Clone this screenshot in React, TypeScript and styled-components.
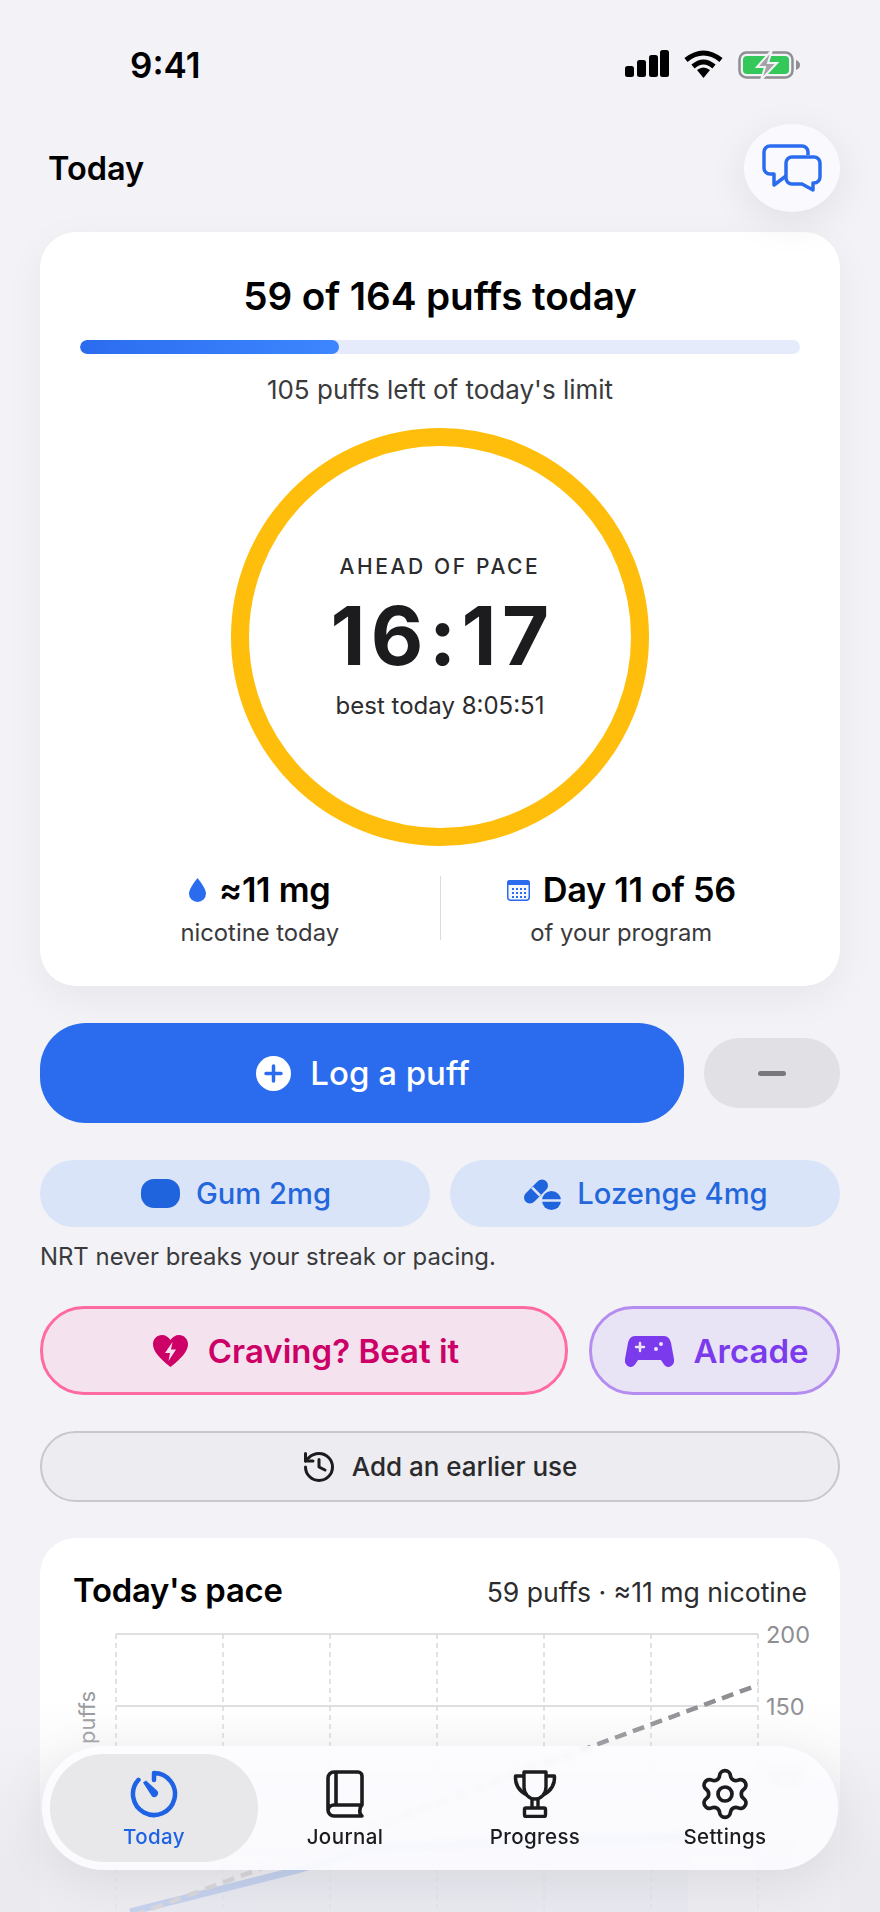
import React from 'react'
import styled, { createGlobalStyle } from 'styled-components'
import { History, Settings } from 'lucide-react'

const BLUE = '#2b6cee'
const INK = '#1c1c1e'

const GlobalStyle = createGlobalStyle`
  html, body {
    margin: 0;
    padding: 0;
    background: #f2f2f7;
  }
  * {
    box-sizing: border-box;
  }
`

const CHART_X = [76, 183, 290, 397, 504, 611, 718]
const CHART_Y = [
  { y: 14, label: '200' },
  { y: 86, label: '150' },
  { y: 158, label: '100' },
  { y: 230, label: '50' },
  { y: 302, label: '0' },
]

const App: React.FC = () => {
  return (
    <Screen>
      <GlobalStyle />
      <StatusBar>
        <Clock>9:41</Clock>
        <StatusIcons>
          <svg width="44" height="28" viewBox="0 0 44 28">
            <rect x="0" y="16" width="9" height="11" rx="2.5" fill="#000" />
            <rect x="12" y="10" width="9" height="17" rx="2.5" fill="#000" />
            <rect x="24" y="5" width="9" height="22" rx="2.5" fill="#000" />
            <rect x="35" y="0" width="9" height="27" rx="2.5" fill="#000" />
          </svg>
          <svg width="39" height="28" viewBox="0 0 39 28">
            <path d="M2 10 Q19.5 -4 37 10" fill="none" stroke="#000" strokeWidth="5" />
            <path d="M9 16.5 Q19.5 7.5 30 16.5" fill="none" stroke="#000" strokeWidth="5" />
            <path d="M13 20 Q19.5 15 26 20 L19.5 28 Z" fill="#000" />
          </svg>
          <svg width="63" height="30" viewBox="0 0 63 30">
            <rect x="1.5" y="2.5" width="53" height="25" rx="7" fill="none" stroke="#8e8e93" strokeWidth="2.5" />
            <rect x="5" y="6" width="46" height="18" rx="4" fill="#34c759" />
            <path d="M58 10 c3 1 4 3 4 5 s-1 4 -4 5 Z" fill="#8e8e93" />
            <path d="M34 0 L19 17 H27 L23 30 L39 13 H30 Z" fill="#a3a3a8" stroke="#f2f2f7" strokeWidth="2" />
          </svg>
        </StatusIcons>
      </StatusBar>

      <Header>
        <PageTitle>Today</PageTitle>
        <ChatButton aria-label="Messages">
          <svg width="60" height="48" viewBox="0 0 60 48" fill="none" stroke={BLUE} strokeWidth="3.5" strokeLinejoin="round">
            <path d="M46 11 V8 a6 6 0 0 0 -6 -6 H8 a6 6 0 0 0 -6 6 V24 a6 6 0 0 0 6 6 H12 V41 L24 32" />
            <path d="M30 13 H52 a6 6 0 0 1 6 6 V33 a6 6 0 0 1 -6 6 H51 V46 L40 40 H30 a6 6 0 0 1 -6 -6 V19 a6 6 0 0 1 6 -6 Z" />
          </svg>
        </ChatButton>
      </Header>

      <Content>
        <TodayCard>
          <Headline>59 of 164 puffs today</Headline>
          <Track>
            <TrackFill style={{ width: `${(59 / 164) * 100}%` }} />
          </Track>
          <Remaining>105 puffs left of today's limit</Remaining>
          <Ring>
            <RingLabel>AHEAD OF PACE</RingLabel>
            <RingTime>16:17</RingTime>
            <RingBest>best today 8:05:51</RingBest>
          </Ring>
          <Stats>
            <Stat>
              <StatValue>
                <svg width="17" height="24" viewBox="0 0 17 24">
                  <path d="M8.5 0 C8.5 0 0 10 0 15.5 a8.5 8.5 0 0 0 17 0 C17 10 8.5 0 8.5 0 Z" fill={BLUE} />
                </svg>
                ≈11 mg
              </StatValue>
              <StatLabel>nicotine today</StatLabel>
            </Stat>
            <StatDivider />
            <Stat $shift={2}>
              <StatValue>
                <svg width="23" height="21" viewBox="0 0 23 21">
                  <rect x="0.75" y="0.75" width="21.5" height="19.5" rx="3" fill="#f4f7fe" stroke={BLUE} strokeWidth="1.5" />
                  <path d="M3 0 H20 a3 3 0 0 1 3 3 V5 H0 V3 a3 3 0 0 1 3 -3 Z" fill={BLUE} />
                  {[9, 13, 17].map((y) =>
                    [5, 9, 13, 17].map((x) => <rect key={`${x}-${y}`} x={x} y={y - 1} width="2" height="2" fill={BLUE} />),
                  )}
                </svg>
                Day 11 of 56
              </StatValue>
              <StatLabel>of your program</StatLabel>
            </Stat>
          </Stats>
        </TodayCard>

        <LogRow>
          <LogButton>
            <svg width="35" height="35" viewBox="0 0 35 35">
              <circle cx="17.5" cy="17.5" r="17.5" fill="#fff" />
              <path d="M17.5 10 V25 M10 17.5 H25" stroke={BLUE} strokeWidth="3.5" strokeLinecap="round" />
            </svg>
            Log a puff
          </LogButton>
          <MinusButton aria-label="Remove a puff">
            <MinusBar />
          </MinusButton>
        </LogRow>

        <NrtRow>
          <NrtButton>
            <GumShape />
            Gum 2mg
          </NrtButton>
          <NrtButton>
            <svg width="37" height="32" viewBox="0 0 37 32">
              <path d="M6 19.5 L18 7.5" stroke="#1f64dc" strokeWidth="12" strokeLinecap="round" />
              <path d="M8 9.5 L16 17.5" stroke="#d9e4f8" strokeWidth="2.5" />
              <circle cx="27.5" cy="22.5" r="9.5" fill="#1f64dc" />
              <path d="M17 22.5 H37" stroke="#d9e4f8" strokeWidth="2.5" />
            </svg>
            Lozenge 4mg
          </NrtButton>
        </NrtRow>
        <Note>NRT never breaks your streak or pacing.</Note>

        <HelpRow>
          <HelpButton $bg="#f4e3ee" $border="#ff6ba0" $color="#cc0066" $grow>
            <svg width="35" height="32" viewBox="0 0 35 32">
              <path
                d="M17.5 32 C6 23 0 16 0 9 C0 4 4 0 9 0 C12.5 0 15.5 2 17.5 5 C19.5 2 22.5 0 26 0 C31 0 35 4 35 9 C35 16 29 23 17.5 32 Z"
                fill="#cc0066"
              />
              <path d="M19.5 7 L12 18 H17 L15.5 26 L23 14.5 H18 Z" fill="#f4e3ee" />
            </svg>
            Craving? Beat it
          </HelpButton>
          <HelpButton $bg="#e8e3f5" $border="#b58cef" $color="#7c3aed" $width={251}>
            <svg width="49" height="32" viewBox="0 0 49 32">
              <path
                d="M10 1 H39 C43 1 45 4 46 8 L49 24 C50 29 46 32 43 32 C40 32 38 28 36 25 H13 C11 28 9 32 6 32 C3 32 -1 29 0 24 L3 8 C4 4 6 1 10 1 Z"
                fill="#7c3aed"
              />
              <path d="M15 8 V16 M11 12 H19" stroke="#e8e3f5" strokeWidth="2.5" strokeLinecap="round" />
              <circle cx="31" cy="14" r="2" fill="#e8e3f5" />
              <circle cx="36" cy="9" r="2" fill="#e8e3f5" />
            </svg>
            Arcade
          </HelpButton>
        </HelpRow>

        <EarlierButton>
          <History size={36} strokeWidth={2} color={INK} />
          Add an earlier use
        </EarlierButton>

        <PaceCard>
          <PaceHeader>
            <PaceTitle>Today's pace</PaceTitle>
            <PaceSummary>59 puffs · ≈11 mg nicotine</PaceSummary>
          </PaceHeader>
          <PaceChart width="800" height="320" viewBox="0 0 800 320">
            {CHART_X.map((x) => (
              <line key={x} x1={x} x2={x} y1="14" y2="320" stroke="#cfcfd4" strokeWidth="1.2" strokeDasharray="5 4" />
            ))}
            {CHART_Y.map(({ y, label }) => (
              <g key={label}>
                <line x1="76" x2="718" y1={y} y2={y} stroke="#d4d4d8" strokeWidth="1.5" />
                <AxisText x="726" y={y + 9}>
                  {label}
                </AxisText>
              </g>
            ))}
            <path d="M90 292 L257 250 L333 228 L648 217 V302 H90 Z" fill="#2b6cee" fillOpacity="0.1" />
            <path d="M90 292 L257 250 L333 228 L648 217" fill="none" stroke={BLUE} strokeWidth="7" />
            <line x1="76" y1="302" x2="718" y2="65" stroke="#8e8e93" strokeWidth="4.5" strokeDasharray="12 7" />
            <AxisName x="0" y="0" transform="translate(55 124) rotate(-90)">
              puffs
            </AxisName>
            <rect x="44" y="140" width="14" height="80" fill="#9a9a9e" />
          </PaceChart>
        </PaceCard>
      </Content>

      <BottomFade />

      <TabBar>
        <Tab $active>
          <svg width="48" height="48" viewBox="0 0 48 48" fill="none">
            <path
              d="M24 10 V3 A21 21 0 1 1 8.5 9.8"
              stroke="#1f63e4"
              strokeWidth="4.5"
              strokeLinecap="round"
              strokeLinejoin="round"
            />
            <path d="M13 12.5 L16 10.5 L27.5 21 A4 4 0 0 1 22 26.5 Z" fill="#1f63e4" />
          </svg>
          <TabLabel $active>Today</TabLabel>
        </Tab>
        <Tab>
          <svg width="48" height="48" viewBox="0 0 38 48" fill="none" stroke={INK} strokeWidth="3.6" strokeLinejoin="round">
            <path d="M36 35 V6 a4 4 0 0 0 -4 -4 H8 a6 6 0 0 0 -6 6 V40 a6 6 0 0 0 6 6 H36 c-3 -2 -3 -8 0 -11 H8 a6 6 0 0 0 -6 5" />
            <path d="M10 2 V35" />
          </svg>
          <TabLabel>Journal</TabLabel>
        </Tab>
        <Tab>
          <svg width="48" height="48" viewBox="0 0 44 48" fill="none" stroke={INK} strokeWidth="3.4" strokeLinejoin="round">
            <path d="M11 2 H33 V17 C33 24 28 29 22 29 C16 29 11 24 11 17 Z" />
            <path d="M11 6 H2.5 C2 14 6 21 14 25 M33 6 H41.5 C42 14 38 21 30 25" />
            <path d="M19 29 V38 M25 29 V38" />
            <rect x="11.5" y="38" width="21" height="8.5" rx="1.5" />
          </svg>
          <TabLabel>Progress</TabLabel>
        </Tab>
        <Tab>
          <GearSlot>
            <Settings size={56} strokeWidth={1.6} color={INK} />
          </GearSlot>
          <TabLabel>Settings</TabLabel>
        </Tab>
      </TabBar>
    </Screen>
  )
}

const Screen = styled.div`
  position: relative;
  width: 880px;
  height: 1912px;
  overflow: hidden;
  background: #f2f2f7;
  font-family: Inter, 'Noto Sans', sans-serif;
  color: ${INK};
`

const StatusBar = styled.div`
  display: flex;
  justify-content: space-between;
  height: 124px;
  padding: 48px 79px 0 130px;
`

const Clock = styled.div`
  font-size: 35px;
  line-height: 34px;
  font-weight: 600;
  color: #000;
`

const StatusIcons = styled.div`
  display: flex;
  align-items: flex-start;
  gap: 15px;
  padding-top: 2px;

  svg {
    display: block;
  }
`

const Header = styled.div`
  display: flex;
  align-items: center;
  justify-content: space-between;
  height: 88px;
  margin-bottom: 20px;
  padding: 0 40px 0 48px;
`

const PageTitle = styled.div`
  font-size: 32.5px;
  font-weight: 600;
  color: #000;
`

const ChatButton = styled.button`
  position: relative;
  z-index: 2;
  display: flex;
  align-items: center;
  justify-content: center;
  width: 96px;
  height: 88px;
  padding: 0;
  border: none;
  border-radius: 50%;
  background: #f9f9fe;
  box-shadow: 0 10px 40px rgba(0, 0, 0, 0.08);
`

const Content = styled.div`
  display: flex;
  flex-direction: column;
  padding: 0 40px;
`

const TodayCard = styled.div`
  display: flex;
  flex-direction: column;
  align-items: center;
  height: 754px;
  padding: 43px 40px 0;
  border-radius: 36px;
  background: #fff;
  box-shadow: 0 12px 40px rgba(0, 0, 0, 0.05);
`

const Headline = styled.div`
  font-size: 38.7px;
  line-height: 42px;
  font-weight: 600;
  letter-spacing: -0.1px;
  color: #000;
`

const Track = styled.div`
  width: 100%;
  height: 14px;
  margin-top: 23px;
  border-radius: 7px;
  background: #e5ebfa;
  overflow: hidden;
`

const TrackFill = styled.div`
  height: 100%;
  border-radius: 7px;
  background: linear-gradient(90deg, #2b6cee, #3d86ff);
`

const Remaining = styled.div`
  margin-top: 20px;
  font-size: 26px;
  line-height: 32px;
  color: #3a3a3c;
`

const Ring = styled.div`
  display: flex;
  flex-direction: column;
  align-items: center;
  justify-content: center;
  flex: none;
  width: 418px;
  height: 418px;
  margin-top: 22px;
  border: 18px solid #ffbe0b;
  border-radius: 50%;
`

const RingLabel = styled.div`
  margin-top: 1px;
  font-size: 21px;
  line-height: 24px;
  font-weight: 500;
  letter-spacing: 2.6px;
  color: #2c2c2e;
`

const RingTime = styled.div`
  margin-top: 17px;
  padding-left: 5px;
  font-size: 81px;
  line-height: 80px;
  font-weight: 700;
  letter-spacing: 5.5px;
  color: ${INK};
`

const RingBest = styled.div`
  margin-top: 15px;
  font-size: 24px;
  line-height: 30px;
  color: #2c2c2e;
`

const Stats = styled.div`
  display: grid;
  grid-template-columns: 1fr 1px 1fr;
  width: 100%;
  margin-top: 30px;
`

const Stat = styled.div<{ $shift?: number }>`
  display: flex;
  flex-direction: column;
  align-items: center;
  padding-left: ${(p) => p.$shift ?? 0}px;
`

const StatValue = styled.div`
  display: flex;
  align-items: center;
  gap: 13px;
  margin-top: -1px;
  font-size: 34.3px;
  line-height: 30px;
  font-weight: 600;
  letter-spacing: -0.3px;
  color: #000;
`

const StatLabel = styled.div`
  margin-top: 17px;
  font-size: 23.8px;
  line-height: 22px;
  color: #3a3a3c;
`

const StatDivider = styled.div`
  height: 64px;
  background: #dcdce0;
`

const LogRow = styled.div`
  display: flex;
  align-items: center;
  gap: 20px;
  margin-top: 37px;
`

const LogButton = styled.button`
  display: flex;
  flex: 1;
  align-items: center;
  justify-content: center;
  gap: 19px;
  height: 100px;
  padding: 0 0 0 2px;
  border: none;
  border-radius: 46px;
  background: ${BLUE};
  color: #fff;
  font-family: inherit;
  font-size: 33px;
  font-weight: 500;
`

const MinusButton = styled.button`
  display: flex;
  align-items: center;
  justify-content: center;
  width: 136px;
  height: 70px;
  padding: 0;
  border: none;
  border-radius: 35px;
  background: #e0e0e5;
`

const MinusBar = styled.span`
  width: 28px;
  height: 5px;
  border-radius: 2.5px;
  background: #77777c;
`

const NrtRow = styled.div`
  display: grid;
  grid-template-columns: 1fr 1fr;
  gap: 20px;
  margin-top: 37px;
`

const NrtButton = styled.button`
  display: flex;
  align-items: center;
  justify-content: center;
  gap: 16px;
  height: 67px;
  padding: 0 0 0 2px;
  border: none;
  border-radius: 34px;
  background: #d9e4f8;
  color: #2467dd;
  font-family: inherit;
  font-size: 29.2px;
  font-weight: 500;
`

const GumShape = styled.span`
  width: 39px;
  height: 29px;
  border-radius: 13px;
  background: #1f64dc;
`

const Note = styled.div`
  margin-top: 17px;
  font-size: 23.9px;
  line-height: 26px;
  color: #3a3a3c;
`

const HelpRow = styled.div`
  display: flex;
  gap: 21px;
  margin-top: 36px;
`

const HelpButton = styled.button<{ $bg: string; $border: string; $color: string; $grow?: boolean; $width?: number }>`
  display: flex;
  flex: ${(p) => (p.$grow ? 1 : 'none')};
  align-items: center;
  justify-content: center;
  gap: 20px;
  width: ${(p) => (p.$width ? `${p.$width}px` : 'auto')};
  height: 89px;
  padding: 0 0 0 4px;
  border: 3px solid ${(p) => p.$border};
  border-radius: 44px;
  background: ${(p) => p.$bg};
  color: ${(p) => p.$color};
  font-family: inherit;
  font-size: 33px;
  font-weight: 600;
`

const EarlierButton = styled.button`
  display: flex;
  align-items: center;
  justify-content: center;
  gap: 15px;
  height: 71px;
  margin-top: 36px;
  padding: 0 2px 0 0;
  border: 2px solid #c8c8cc;
  border-radius: 36px;
  background: #ececf1;
  color: #2a2a2c;
  font-family: inherit;
  font-size: 26px;
  font-weight: 500;
`

const PaceCard = styled.div`
  flex: none;
  height: 420px;
  margin-top: 36px;
  padding-top: 32px;
  border-radius: 36px;
  background: #fff;
`

const PaceHeader = styled.div`
  display: flex;
  align-items: center;
  justify-content: space-between;
  height: 40px;
  padding: 0 33px;
`

const PaceTitle = styled.div`
  font-size: 32.8px;
  font-weight: 600;
  letter-spacing: -0.2px;
  color: #000;
`

const PaceSummary = styled.div`
  padding-top: 4px;
  font-size: 26.6px;
  color: #2c2c2e;
`

const PaceChart = styled.svg`
  display: block;
  margin-top: 10px;
`

const AxisText = styled.text`
  font-family: Inter, sans-serif;
  font-size: 23.5px;
  fill: #8e8e93;
`

const AxisName = styled.text`
  font-family: Inter, sans-serif;
  font-size: 22px;
  fill: #98989c;
`

const BottomFade = styled.div`
  position: absolute;
  left: 0;
  right: 0;
  bottom: 0;
  height: 212px;
  background: linear-gradient(180deg, rgba(236, 236, 241, 0) 0%, rgba(236, 236, 241, 0.2) 20%, rgba(232, 232, 237, 0.8) 75%, rgba(232, 232, 237, 0.82) 100%);
  pointer-events: none;
`

const TabBar = styled.nav`
  position: absolute;
  left: 42px;
  top: 1746px;
  display: flex;
  width: 796px;
  height: 124px;
  padding: 8px;
  border-radius: 62px;
  background: rgba(252, 252, 255, 0.9);
  backdrop-filter: blur(3px);
  box-shadow: 0 10px 50px rgba(0, 0, 0, 0.08);
`

const Tab = styled.div<{ $active?: boolean }>`
  display: flex;
  flex-direction: column;
  align-items: center;
  flex: none;
  width: ${(p) => (p.$active ? '208px' : '190px')};
  margin-right: ${(p) => (p.$active ? '-8px' : '0')};
  padding-top: 16px;
  border-radius: 54px;
  background: ${(p) => (p.$active ? 'rgba(230, 230, 233, 0.92)' : 'transparent')};

  svg {
    display: block;
  }
`

const GearSlot = styled.div`
  display: flex;
  align-items: center;
  justify-content: center;
  height: 48px;
`

const TabLabel = styled.div<{ $active?: boolean }>`
  margin-top: 6px;
  font-size: 20.5px;
  line-height: 26px;
  font-weight: 500;
  letter-spacing: 0.4px;
  color: ${(p) => (p.$active ? '#1f63e4' : INK)};
`

export default App
